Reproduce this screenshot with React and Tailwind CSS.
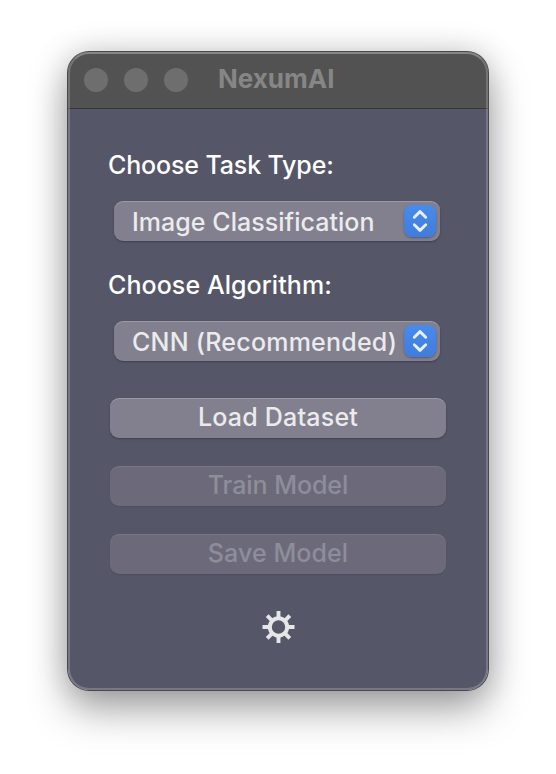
function Select({ value, tracking }) {
  return (
    <div className="ml-1.5 flex h-10 w-[326px] items-center rounded-[9px] bg-[#82808e] pr-1 pl-[18px] shadow-[0_1px_2px_rgba(20,20,35,0.35),inset_0_1px_0_rgba(255,255,255,0.2)]">
      <span className={`mt-0.5 h-[30px] flex-1 whitespace-nowrap text-[25px] leading-[30px] font-[450] text-[#ebebed] ${tracking}`}>{value}</span>
      <span className="flex h-8 w-8 shrink-0 items-center justify-center rounded-[8px] bg-linear-to-b from-[#468bee] to-[#427cda] shadow-[0_1px_2px_rgba(30,30,60,0.4)]">
        <svg width="32" height="32" viewBox="0 0 32 32" fill="none" stroke="#e8effc" strokeWidth="2.9" strokeLinecap="round" strokeLinejoin="round">
          <path d="M10.3 12.2 16 6.6l5.7 5.6M10.3 19.8 16 25.4l5.7-5.6" />
        </svg>
      </span>
    </div>
  );
}

function Button({ children, disabled, tracking }) {
  const look = disabled
    ? "bg-[#6c6a7a] text-[#8e8d9a] shadow-[0_1px_1px_rgba(20,20,35,0.12),inset_0_1px_0_rgba(255,255,255,0.09)]"
    : "bg-[#82808e] text-[#ebebed] shadow-[0_1px_2px_rgba(20,20,35,0.35),inset_0_1px_0_rgba(255,255,255,0.2)]";
  return (
    <button disabled={disabled} className={`ml-0.5 flex h-10 w-[336px] justify-center rounded-[9px] pt-1 text-[25px] leading-[30px] font-[450] whitespace-nowrap ${look} ${tracking}`}>
      {children}
    </button>
  );
}

function Gear() {
  const angles = [0, 45, 90, 135, 180, 225, 270, 315];
  return (
    <svg width="34" height="34" viewBox="-17.5 -17 34 34" className="block" fill="none" stroke="#e6e5e8">
      <circle r="8.7" strokeWidth="4" />
      {angles.map((a) => (
        <path key={a} d="M0-9.5V-16" strokeWidth="3.9" transform={`rotate(${a})`} />
      ))}
    </svg>
  );
}

export default function App() {
  return (
    <main className="h-[774px] w-[556px] overflow-hidden bg-white pt-[52px] pl-[68px] font-['Inter',sans-serif]">
      <div className="h-[638px] w-[420px] rounded-[21px] shadow-[0_0_0_1px_#49494b,0_20px_40px_rgba(0,0,0,0.34),0_0_32px_rgba(0,0,0,0.18)]">
        <div className="relative flex h-full flex-col overflow-hidden rounded-[21px] bg-[#555668]">
          <header className="flex h-[57px] shrink-0 items-center border-b border-[#373739] bg-[#525252] pl-4">
            <div className="flex gap-4">
              <span className="h-6 w-6 rounded-full bg-[#6e6e6e]" />
              <span className="h-6 w-6 rounded-full bg-[#6e6e6e]" />
              <span className="h-6 w-6 rounded-full bg-[#6e6e6e]" />
            </div>
            <h1 className="-mt-0.5 ml-[30px] text-[26px] leading-[30px] font-bold text-[#868686]">NexumAI</h1>
          </header>
          <section className="pt-[41px] pl-10">
            <p className="h-[30px] text-[25px] leading-[30px] font-[450] tracking-[-0.14px] text-white">Choose Task Type:</p>
            <div className="mt-[21px]"><Select value="Image Classification" tracking="tracking-[0.04px]" /></div>
            <p className="mt-[29px] h-[30px] text-[25px] leading-[30px] font-[450] tracking-[0.07px] text-white">Choose Algorithm:</p>
            <div className="mt-[21px]"><Select value="CNN (Recommended)" tracking="tracking-[0.22px]" /></div>
            <div className="mt-[37px] flex flex-col gap-7">
              <Button tracking="tracking-[0.22px]">Load Dataset</Button>
              <Button disabled tracking="tracking-[-0.05px]">Train Model</Button>
              <Button disabled tracking="tracking-[0.07px]">Save Model</Button>
            </div>
            <div className="mt-[36px] ml-[153px]"><Gear /></div>
          </section>
          <div className="pointer-events-none absolute inset-0 rounded-[21px] border-2 border-t-white/30 border-r-white/20 border-b-white/20 border-l-white/20" />
        </div>
      </div>
    </main>
  );
}
